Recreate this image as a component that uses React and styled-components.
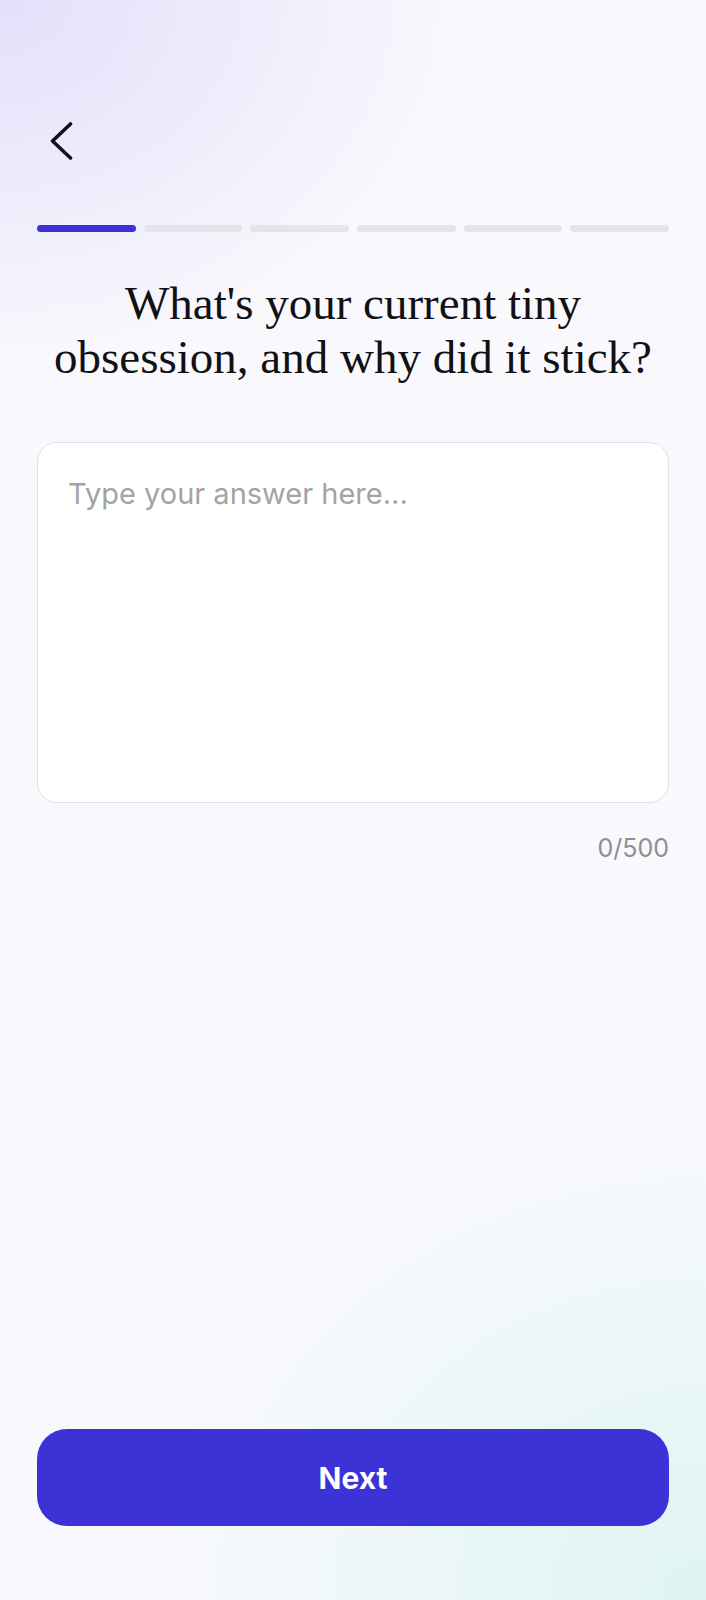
import React, { useState } from "react";
import styled, { createGlobalStyle } from "styled-components";

const GlobalStyle = createGlobalStyle`
  * {
    box-sizing: border-box;
  }
  body {
    margin: 0;
    font-family: Inter, "Noto Sans", sans-serif;
    background: #f9f9fd;
  }
`;

const Page = styled("div")`
  min-height: 1600px;
  display: flex;
  flex-direction: column;
  padding: 0 37px 74px;
  background:
    radial-gradient(ellipse 480px 380px at 0px 0px, rgba(226, 222, 250, 0.95), rgba(226, 222, 250, 0) 100%),
    radial-gradient(ellipse 560px 480px at 706px 1600px, rgba(222, 244, 242, 1), rgba(222, 244, 242, 0) 100%),
    #f9f9fd;
`;

const BackButton = styled("button")`
  margin: 121px 0 0 13px;
  padding: 0;
  width: 24px;
  height: 40px;
  border: none;
  background: transparent;
  cursor: pointer;
  display: flex;
`;

const Progress = styled("div")`
  margin-top: 64px;
  display: grid;
  grid-template-columns: repeat(${(props) => props.steps}, 1fr);
  gap: 8px;
`;

const Step = styled("div")`
  height: 7px;
  border-radius: 4px;
  background: ${(props) => (props.active ? "#3b30d9" : "#e4e4ea")};
`;

const Title = styled("h1")`
  margin: 44px 0 0;
  font-family: "Liberation Serif", "Times New Roman", serif;
  font-weight: 400;
  font-size: 47px;
  line-height: 54px;
  text-align: center;
  color: #111114;
`;

const Answer = styled("textarea")`
  margin-top: 58px;
  height: 361px;
  width: 100%;
  resize: none;
  border: 1.5px solid #e2e2e6;
  border-radius: 20px;
  background: #ffffff;
  padding: 33px 30px;
  font-family: Inter, "Noto Sans", sans-serif;
  font-size: 29px;
  line-height: 36px;
  color: #1c1c1e;
  outline: none;

  &::placeholder {
    color: #a3a3a6;
  }
`;

const Counter = styled("div")`
  margin-top: 31px;
  text-align: right;
  font-size: 25px;
  line-height: 28px;
  color: #8e8e93;
`;

const NextButton = styled("button")`
  margin-top: auto;
  height: 97px;
  width: 100%;
  border: none;
  border-radius: 30px;
  background: #3b33d6;
  color: #ffffff;
  font-family: Inter, "Noto Sans", sans-serif;
  font-size: 30px;
  font-weight: 700;
  cursor: pointer;
`;

const App = () => {
  const [answer, setAnswer] = useState("");
  const steps = [0, 1, 2, 3, 4, 5];
  return (
    <>
      <GlobalStyle />
      <Page>
        <BackButton aria-label="Back">
          <svg width="24" height="40" viewBox="0 0 24 40" fill="none">
            <polyline
              points="20.5,3 2.5,20 20.5,37"
              stroke="#111114"
              strokeWidth="3.6"
              strokeLinecap="round"
              strokeLinejoin="round"
            />
          </svg>
        </BackButton>
        <Progress steps={steps.length}>
          {steps.map((s) => (
            <Step key={s} active={s === 0} />
          ))}
        </Progress>
        <Title>
          What's your current tiny
          <br />
          obsession, and why did it stick?
        </Title>
        <Answer
          placeholder="Type your answer here..."
          value={answer}
          maxLength={500}
          onChange={(e) => setAnswer(e.target.value)}
        />
        <Counter>{answer.length}/500</Counter>
        <NextButton>Next</NextButton>
      </Page>
    </>
  );
};

export default App;
